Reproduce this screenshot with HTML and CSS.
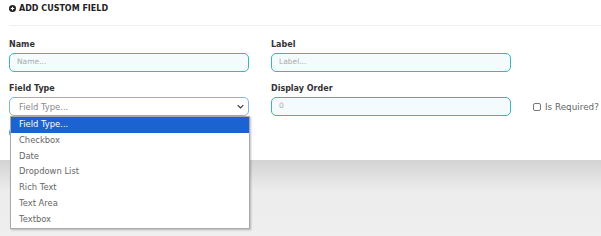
FILE: index.html
```html
<!DOCTYPE html>
<html lang="en">
<head>
    <meta charset="UTF-8">
    <title>Add Custom Field</title>
    <link rel="stylesheet" href="styles.css">
</head>
<body>
    <div class="card">
        <div class="card-header">
            <svg class="plus-icon" width="7" height="7" viewBox="0 0 16 16">
                <circle cx="8" cy="8" r="8" fill="#222"/>
                <path d="M8 4v8M4 8h8" stroke="#fff" stroke-width="2.6"/>
            </svg>
            <span>ADD CUSTOM FIELD</span>
        </div>

        <div class="form-grid">
            <div class="form-group">
                <label>Name</label>
                <div class="input">Name...</div>
            </div>
            <div class="form-group">
                <label>Label</label>
                <div class="input">Label...</div>
            </div>
            <div></div>

            <div class="form-group">
                <label>Field Type</label>
                <div class="select-wrap">
                    <div class="select">
                        <span>Field Type...</span>
                        <svg width="7" height="5" viewBox="0 0 10 6">
                            <path d="M1 1l4 4 4-4" fill="none" stroke="#333" stroke-width="1.6"/>
                        </svg>
                    </div>
                    <div class="add-btn"></div>
                    <ul class="options">
                        <li class="active">Field Type...</li>
                        <li>Checkbox</li>
                        <li>Date</li>
                        <li>Dropdown List</li>
                        <li>Rich Text</li>
                        <li>Text Area</li>
                        <li>Textbox</li>
                    </ul>
                </div>
            </div>
            <div class="form-group">
                <label>Display Order</label>
                <div class="input">0</div>
            </div>
            <div class="check-group">
                <span class="checkbox"></span>
                <span>Is Required?</span>
            </div>
        </div>
    </div>
    <div class="page-bottom"></div>
</body>
</html>
```

FILE: styles.css
```css
* {
    margin: 0;
    padding: 0;
    box-sizing: border-box;
}

body {
    font-family: 'DejaVu Sans', sans-serif;
    background-color: #efefef;
    color: #333;
    overflow: hidden;
}

.card {
    background-color: white;
    height: 160px;
    padding: 0 0 0 9px;
}

.card-header {
    height: 26px;
    display: flex;
    align-items: flex-start;
    gap: 3px;
    padding-top: 4px;
    border-bottom: 1px solid #f0f0f0;
    font-size: 8px;
    font-weight: bold;
    color: #222;
    line-height: 9px;
}

.plus-icon {
    margin-top: 1px;
}

.form-grid {
    display: grid;
    grid-template-columns: 241px 241px auto;
    column-gap: 21px;
    row-gap: 11px;
    padding-top: 13px;
}

label {
    display: block;
    font-size: 8px;
    font-weight: bold;
    color: #333;
    line-height: 12px;
    margin-bottom: 2px;
}

.input {
    height: 19px;
    width: 240px;
    border: 1.5px solid #3bb7b9;
    border-radius: 5px;
    background-color: #f3fbfd;
    color: #aaa;
    font-size: 7.5px;
    line-height: 16px;
    padding-left: 7px;
}

.select-wrap {
    position: relative;
}

.select {
    position: relative;
    z-index: 1;
    height: 19px;
    width: 240px;
    border: 1px solid #7fb5ee;
    border-radius: 5px;
    background-color: white;
    color: #888;
    font-size: 8.4px;
    display: flex;
    align-items: center;
    justify-content: space-between;
    padding: 0 4px 0 9px;
}

.add-btn {
    position: absolute;
    top: 32px;
    left: 0;
    width: 60px;
    height: 7px;
    background-color: #3bb7b9;
    border-radius: 3px;
}

.options {
    list-style: none;
    position: absolute;
    top: 19px;
    left: 1px;
    width: 240px;
    height: 113px;
    background-color: white;
    border: 1px solid #a9a9a9;
    box-shadow: 1px 1px 2px rgba(0, 0, 0, 0.25);
    z-index: 2;
}

.options li {
    height: 15.8px;
    line-height: 15.8px;
    padding-left: 8px;
    font-size: 8.4px;
    color: #666;
}

.options li.active {
    background-color: #1a63d1;
    color: white;
}

.check-group {
    display: flex;
    align-items: center;
    gap: 4px;
    align-self: end;
    height: 19px;
    font-size: 8.8px;
    color: #666;
}

.checkbox {
    width: 8px;
    height: 8px;
    border: 1px solid #777;
    border-radius: 2px;
}

.page-bottom {
    height: 76px;
    background: linear-gradient(#d3d3d3, #ececec 30px, #efefef);
}
```
